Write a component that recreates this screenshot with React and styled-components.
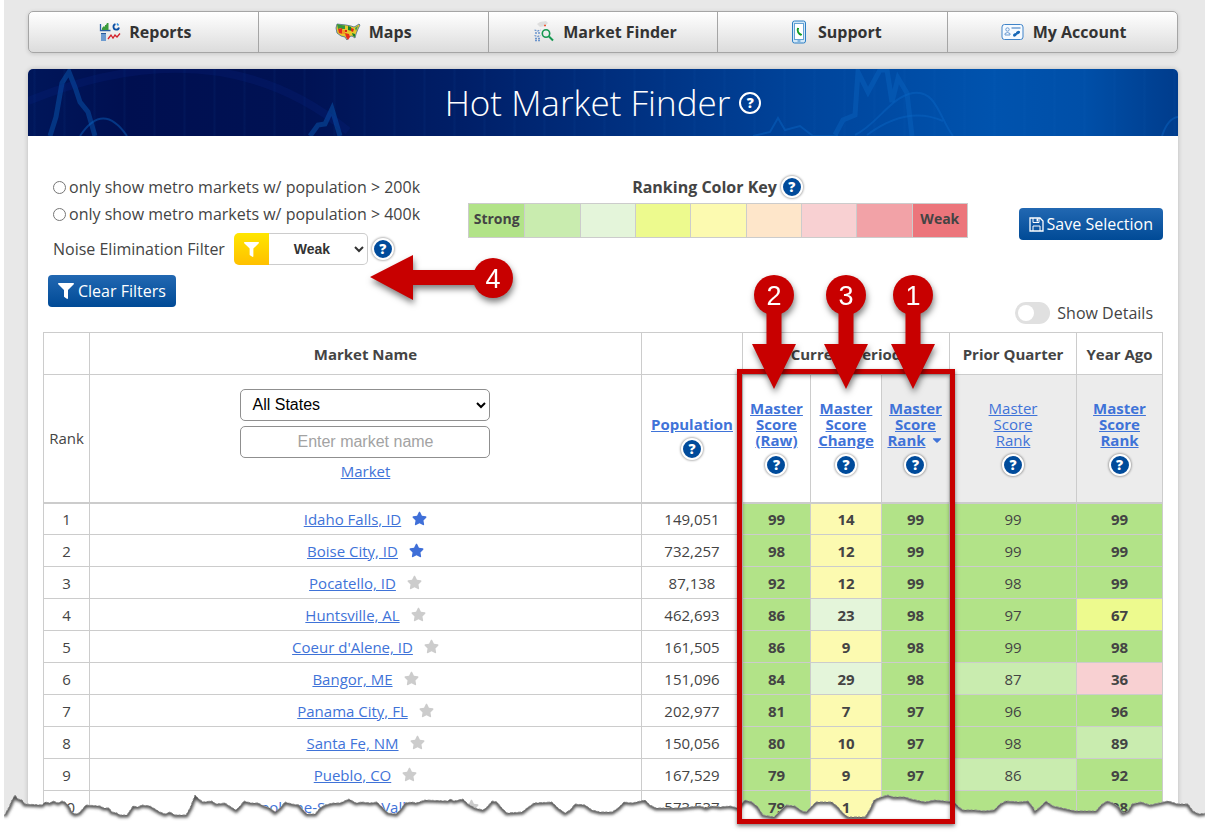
import React from "react";
import styled, { createGlobalStyle, css } from "styled-components";
import { FaCaretDown, FaFilter, FaStar } from "react-icons/fa";

const GlobalStyle = createGlobalStyle`
  *, *::before, *::after {
    box-sizing: border-box;
  }

  body {
    margin: 0;
    background: #fff;
    color: #444;
    font-family: "Open Sans", sans-serif;
    font-size: 16px;
  }
`;

const Page = styled.div`
  position: relative;
  overflow: hidden;
  min-height: 100vh;
  margin: 0 5px 0 4px;
  padding: 11px 27px 0 24px;
  background: #e8e8e8;
`;

const Nav = styled.nav`
  display: flex;
  height: 42px;
  overflow: hidden;
  border: 1px solid #a5a5a5;
  border-radius: 5px;
  background: linear-gradient(#fff, #dcdcdc);
  box-shadow: 0 1px 4px rgba(0, 0, 0, 0.15);
`;

const NavLink = styled.a`
  flex: 1;
  display: flex;
  align-items: center;
  justify-content: center;
  gap: 8px;
  color: #333;
  font-weight: 700;
  text-decoration: none;

  & + & {
    border-left: 1px solid #a5a5a5;
  }
`;

const Panel = styled.main`
  margin-top: 16px;
  padding-bottom: 11px;
  border-radius: 5px 5px 0 0;
  background: #fff;
  box-shadow: 0 0 5px rgba(0, 0, 0, 0.2);
`;

const Banner = styled.header`
  position: relative;
  display: flex;
  align-items: center;
  justify-content: center;
  gap: 9px;
  height: 67px;
  overflow: hidden;
  border-radius: 5px 5px 0 0;
  color: #fff;
  background:
    repeating-linear-gradient(
      90deg,
      transparent 0 5px,
      rgba(30, 110, 200, 0.06) 6px 7px,
      transparent 8px 30px
    ),
    linear-gradient(
      90deg,
      #00165a 0%,
      #000f50 9%,
      #001254 24%,
      #001f68 38%,
      #003080 52%,
      #00459c 68%,
      #0053ae 84%,
      #004fa8 92%,
      #003c8c 100%
    );
`;

const BannerLines = styled.svg`
  position: absolute;
  inset: 0;
  width: 100%;
  height: 100%;
  fill: none;
  stroke: #0a66c4;
`;

const Title = styled.h1`
  position: relative;
  margin: 0;
  font-size: 35px;
  font-weight: 300;
  line-height: 48px;
`;

const helpBase = css`
  display: inline-flex;
  align-items: center;
  justify-content: center;
  flex: none;
  padding: 0;
  color: #fff;
  font-family: "Open Sans", sans-serif;
  font-weight: 800;
`;

const TitleHelp = styled.button`
  ${helpBase}
  position: relative;
  width: 22px;
  height: 22px;
  border: 2px solid #fff;
  border-radius: 50%;
  background: none;
  font-size: 14px;
  line-height: 14px;
`;

const HelpButton = styled.button`
  ${helpBase}
  width: 22px;
  height: 22px;
  margin: 1px;
  border: 2px solid #fff;
  border-radius: 50%;
  background: #004b9b;
  box-shadow: 0 0 2px 1px rgba(0, 0, 0, 0.28);
  font-size: 14px;
  line-height: 14px;
`;

const Controls = styled.section`
  position: relative;
  display: grid;
  grid-template-columns: 425px minmax(0, 500px) 1fr;
  min-height: 196px;
  padding: 37px 15px 0;
`;

const Filters = styled.div`
  padding: 1px 0 0 5px;
`;

const RadioLabel = styled.label`
  display: flex;
  align-items: center;
  gap: 3px;
  padding-left: 5px;
  line-height: 27px;

  input {
    width: 13px;
    height: 13px;
    margin: 0;
  }
`;

const NoiseRow = styled.div`
  display: flex;
  align-items: center;
  gap: 3px;
  margin: 5px 0 10px;
  padding-left: 5px;

  label {
    margin-right: 6px;
  }
`;

const NoiseSelect = styled.div`
  display: flex;
  width: 134px;
  height: 32px;

  select {
    flex: 1;
    padding: 0;
    border: 1px solid #ccc;
    border-left: 0;
    border-radius: 0 5px 5px 0;
    background: #fff;
    color: #333;
    font: bold 14px "Liberation Sans", Arial, sans-serif;
    text-align: center;
    text-align-last: center;
  }
`;

const FilterBadge = styled.span`
  display: flex;
  align-items: center;
  justify-content: center;
  width: 35px;
  border-radius: 5px 0 0 5px;
  background: linear-gradient(#ffe600, #ffc000);
  color: #fff;
  font-size: 15px;
`;

const ActionButton = styled.button`
  display: inline-flex;
  align-items: center;
  gap: ${({ $gap }) => $gap || "4px"};
  height: 32px;
  padding: 0 10px;
  border: 0;
  border-radius: 4px;
  background: linear-gradient(#2268b2, #004a96);
  color: #fff;
  font: 16px "Open Sans", sans-serif;
  white-space: nowrap;
`;

const KeyTitle = styled.div`
  display: flex;
  align-items: center;
  justify-content: center;
  gap: 3px;
  height: 27px;
  font-weight: 700;
`;

const KeyScale = styled.div`
  display: grid;
  grid-template-columns: repeat(9, 1fr);
  height: 35px;
  margin-top: 3px;
  border: 1px solid #ccc;
`;

const KeyCell = styled.span`
  padding-top: 5px;
  background: ${({ $color }) => $color};
  font-size: 14px;
  font-weight: 700;
  line-height: 19px;
  text-align: center;

  & + & {
    border-left: 1px solid #ccc;
  }
`;

const SideActions = styled.div`
  display: flex;
  flex-direction: column;
  align-items: flex-end;
  justify-content: space-between;
  padding: 35px 0 8px;
`;

const SwitchLabel = styled.label`
  display: flex;
  align-items: center;
  gap: 7px;
  height: 22px;
  margin-right: 10px;
`;

const Switch = styled.input`
  appearance: none;
  display: flex;
  align-items: center;
  width: 35px;
  height: 22px;
  margin: 0;
  padding: 0 3px;
  border-radius: 11px;
  background: #e0e0e0;

  &::before {
    content: "";
    width: 16px;
    height: 16px;
    border-radius: 50%;
    background: #fff;
  }

  &:checked {
    justify-content: flex-end;
    background: #004b9b;
  }
`;

const TableWrap = styled.section`
  position: relative;
  margin: 0 15px;
`;

const Table = styled.table`
  width: 100%;
  table-layout: fixed;
  border-collapse: collapse;
  font-size: 15px;
  text-align: center;

  th,
  td {
    padding: 0;
    border: 1px solid #ccc;
  }
`;

const Col = styled.col`
  width: ${({ $width }) => $width};
`;

const GroupRow = styled.tr`
  height: 42px;
`;

const HeadRow = styled.tr`
  height: 128px;

  th {
    border-bottom-width: 2px;
  }
`;

const HeadCell = styled.th`
  background: ${({ $shaded }) => ($shaded ? "#ececec" : "#fff")};
  font-weight: ${({ $bold }) => ($bold ? 700 : 400)};
  line-height: 16px;

  ${HelpButton} {
    margin-top: 6px;
  }
`;

const Link = styled.a`
  color: #3f73d8;
  text-decoration: underline;
`;

const SortIcon = styled(FaCaretDown)`
  margin-left: 4px;
  color: #3f73d8;
  font-size: 14px;
  vertical-align: -1px;
`;

const MarketFilter = styled.div`
  display: flex;
  flex-direction: column;
  align-items: center;
  padding-bottom: 3px;
  line-height: 27px;
`;

const fieldStyle = css`
  width: 250px;
  height: 32px;
  border: 1px solid #8f8f8f;
  border-radius: 5px;
  background: #fff;
  color: #000;
  font: 16px "Liberation Sans", Arial, sans-serif;
`;

const StateSelect = styled.select`
  ${fieldStyle}
  margin-bottom: 5px;
  padding: 0 0 0 7px;
`;

const MarketInput = styled.input`
  ${fieldStyle}
  text-align: center;

  &::placeholder {
    color: #a3a3a3;
  }
`;

const Row = styled.tr`
  height: 32px;
`;

const Market = styled.div`
  display: flex;
  align-items: center;
  justify-content: center;
  gap: 11px;
  white-space: nowrap;
`;

const Star = styled(FaStar)`
  color: ${({ $starred }) => ($starred ? "#3f6fd8" : "#ccc")};
  font-size: 15px;
`;

const Score = styled.td`
  background: ${({ $color }) => $color};
  font-weight: ${({ $bold }) => ($bold ? 700 : 400)};
`;

const Highlight = styled.div`
  position: absolute;
  z-index: 2;
  top: 37px;
  right: 208px;
  width: 218px;
  height: 455px;
  border: 5px solid #c80000;
  box-shadow: 0 2px 4px rgba(0, 0, 0, 0.5), inset 0 2px 4px rgba(0, 0, 0, 0.4);
  pointer-events: none;
`;

const arrowStyle = css`
  position: absolute;
  z-index: 3;
  overflow: visible;
  fill: #c80000;
  filter: drop-shadow(1px 4px 3px rgba(0, 0, 0, 0.5));
  pointer-events: none;

  text {
    fill: #fff;
    font: 27px "Liberation Sans", Arial, sans-serif;
    text-anchor: middle;
  }
`;

const DownArrow = styled.svg`
  ${arrowStyle}
  top: -58px;
  right: ${({ $right }) => $right};
`;

const LeftArrow = styled.svg`
  ${arrowStyle}
  top: 119px;
  left: 342px;
`;

const TornEdge = styled.svg`
  position: absolute;
  z-index: 1;
  bottom: 0;
  left: -4px;
  width: calc(100% + 9px);
  height: 54px;
  pointer-events: none;
`;

const ReportsIcon = () => (
  <svg width="26" height="22" viewBox="0 0 26 22" fill="none" aria-hidden="true">
    <path d="M5.500 3v6.500h10" stroke="#2a62a8" strokeWidth="1.300" />
    <path d="M7 9V7l2-2 1 1V4h1l1-2h1.500v7z" fill="#3c9b3c" />
    <path d="M20.500 3.200a2.800 2.800 0 1 0 3.500 3.300" stroke="#0b4ea2" strokeWidth="1.800" />
    <path d="M22 2.500l1.500 2" stroke="#2d8fe0" strokeWidth="1.500" />
    <path d="M6 12h5v8H6z" fill="#6d9bd0" />
    <path d="M6 12.500h5" stroke="#285a9c" />
    <path d="M13 18l3-4 2 3 2-3 2 2 3-3.500" stroke="#d3202a" strokeWidth="1.300" />
  </svg>
);

const MapsIcon = () => (
  <svg width="26" height="20" viewBox="0 0 26 20" aria-hidden="true">
    <path
      d="M2 2l9 1 5 1 3 1 2-1 3-2 1 1-2 4-2 5-1 4-3-2-4 1-1 3-2-3-4-1-4-3-1-5z"
      fill="#e8c92c"
      stroke="#426b94"
      strokeWidth=".8"
    />
    <path d="M2 2l4 1v3l-3 1z" fill="#34963c" />
    <path d="M6 3l4 .5V7H6z" fill="#34963c" />
    <path d="M3 7l4-1 1 6-4-1zM10 11l4 1 1 3-2 3-2-3z" fill="#e72c1e" />
    <path d="M13 4l3 1 1 4-4-1zM17 11l3 1v3l-2-1z" fill="#14822e" />
    <path d="M7 8h3v4H7z" fill="#f09b21" />
    <path d="M16 6l3 1-1 3-2-1zM10 8h2v2h-2z" fill="#d82818" />
    <path d="M20 6l3-2-2 5z" fill="#2f9d53" />
  </svg>
);

const FinderIcon = () => (
  <svg width="26" height="24" viewBox="0 0 26 24" fill="none" aria-hidden="true">
    <path d="M8 4l3-2 6-1 2 2-3 3-5 1z" fill="#dedede" />
    <path d="M15 5.500h2" stroke="#ef5834" strokeWidth="1.500" />
    <path
      d="M5.500 10l3 1 3-1M6 13h5M5.500 15.500l3 1 3-1M6 18.500h6M6 20.500h5"
      stroke="#6b94cc"
      strokeWidth="1.300"
      strokeDasharray="2 1"
    />
    <circle cx="17" cy="13.500" r="3.700" stroke="#159850" strokeWidth="1.600" />
    <path d="M20 16.500l4 4" stroke="#159850" strokeWidth="2" />
  </svg>
);

const SupportIcon = () => (
  <svg width="26" height="24" viewBox="0 0 26 24" fill="none" aria-hidden="true">
    <rect x="8.500" y="1" width="13" height="22" rx="2" fill="#d4e8f7" stroke="#2c7fc4" />
    <rect x="10.500" y="3.500" width="9" height="16" fill="#fff" stroke="#64a2d4" />
    <path d="M13.500 21h3" stroke="#2c7fc4" />
    <path d="M14 8c-1 3 .5 6 3.500 7" stroke="#159b27" strokeWidth="2" />
    <path d="M13 8.500h2M16 14.500h2" stroke="#159b27" />
  </svg>
);

const AccountIcon = () => (
  <svg width="26" height="20" viewBox="0 0 26 20" fill="none" aria-hidden="true">
    <rect x="3" y="2.500" width="21" height="15" rx="2.500" fill="#f5faff" stroke="#3f83c8" />
    <circle cx="8.500" cy="7.500" r="1.700" stroke="#6b9bd1" />
    <path d="M6 13v-1.500q2.500-2 5 0V13z" stroke="#6b9bd1" />
    <path d="M12.500 6h9" stroke="#91b5dd" strokeWidth="2" />
    <ellipse cx="16" cy="12.800" rx="2.200" ry="1.500" transform="rotate(-35 16 12.800)" fill="#1567b7" />
    <ellipse cx="19" cy="10.600" rx="2.200" ry="1.500" transform="rotate(-35 19 10.600)" fill="#1567b7" />
  </svg>
);

const SaveIcon = () => (
  <svg width="15" height="15" viewBox="0 0 15 15" fill="none" stroke="#fff" aria-hidden="true">
    <path d="M1 1h10l3 3v10H1z" strokeWidth="1.300" />
    <path d="M4 14V9h7v5M4 1v4.500h6V1" />
    <path d="M8.300 1.500v3" strokeWidth="1.500" />
  </svg>
);

const navItems = [
  { label: "Reports", Icon: ReportsIcon },
  { label: "Maps", Icon: MapsIcon },
  { label: "Market Finder", Icon: FinderIcon },
  { label: "Support", Icon: SupportIcon },
  { label: "My Account", Icon: AccountIcon }
];

const scale = [
  "#b2e388",
  "#c9ecaf",
  "#e4f5da",
  "#edfa8e",
  "#fcfab0",
  "#fee6ca",
  "#f8d0d2",
  "#f2a2a7",
  "#ec757b"
];

const keyLabels = { 0: "Strong", 8: "Weak" };

const columnWidths = ["46px", "auto", "101px", "68px", "71px", "68px", "127px", "86px"];

// scores: [value, index in the color scale]
const markets = [
  { name: "Idaho Falls, ID", starred: true, population: "149,051", scores: [[99, 0], [14, 4], [99, 0], [99, 0], [99, 0]] },
  { name: "Boise City, ID", starred: true, population: "732,257", scores: [[98, 0], [12, 4], [99, 0], [99, 0], [99, 0]] },
  { name: "Pocatello, ID", population: "87,138", scores: [[92, 0], [12, 4], [99, 0], [98, 0], [99, 0]] },
  { name: "Huntsville, AL", population: "462,693", scores: [[86, 0], [23, 2], [98, 0], [97, 0], [67, 3]] },
  { name: "Coeur d'Alene, ID", population: "161,505", scores: [[86, 0], [9, 4], [98, 0], [99, 0], [98, 0]] },
  { name: "Bangor, ME", population: "151,096", scores: [[84, 0], [29, 2], [98, 0], [87, 1], [36, 6]] },
  { name: "Panama City, FL", population: "202,977", scores: [[81, 0], [7, 4], [97, 0], [96, 0], [96, 0]] },
  { name: "Santa Fe, NM", population: "150,056", scores: [[80, 0], [10, 4], [97, 0], [98, 0], [89, 1]] },
  { name: "Pueblo, CO", population: "167,529", scores: [[79, 0], [9, 4], [97, 0], [86, 1], [92, 0]] },
  { name: "Spokane-Spokane Valley, WA", population: "573,537", scores: [[79, 0], [1, 4], [97, 0], [97, 0], [98, 0]] }
];

const scoreHeads = [
  { id: "raw", lines: ["Master", "Score", "(Raw)"], bold: true },
  { id: "change", lines: ["Master", "Score", "Change"], bold: true },
  { id: "rank", lines: ["Master", "Score", "Rank"], bold: true, shaded: true, sorted: true },
  { id: "prior", lines: ["Master", "Score", "Rank"], shaded: true },
  { id: "year", lines: ["Master", "Score", "Rank"], bold: true, shaded: true }
];

const tear =
  "M4 816L9 807L12 800L15 795L18 799L22 800L25 804L42 805L45 802L50 803L53 801L58 803L62 801L65 802L69 806L72 812L75 814L79 813L86 805L100 806L104 808L109 808L112 812L117 813L120 815L127 815L133 806L138 807L142 805L150 806L155 809L160 812L165 814L170 812L175 815L186 815L190 808L195 795L199 799L203 802L212 801L216 804L225 803L231 807L236 810L240 806L244 801L251 803L258 803L264 806L270 808L275 812L280 808L285 802L292 804L299 805L303 810L307 814L315 814L320 808L325 805L333 803L340 803L349 799L356 803L362 802L370 803L377 802L382 807L388 813L396 814L401 809L405 803L412 802L416 803L425 800L448 801L450 799L454 801L463 799L468 804L475 808L483 810L487 807L492 801L497 802L501 807L507 813L522 812L527 808L534 803L552 802L558 808L565 813L570 810L575 804L585 805L592 810L600 812L612 812L618 808L624 802L632 803L645 800L650 805L656 808L680 808L700 806L706 808L712 806L720 807L730 806L738 808L745 800L752 802L758 807L763 815L774 817L780 811L786 805L795 806L802 811L806 812L812 806L816 802L832 802L838 807L843 813L848 817L865 817L870 809L874 800L881 797L888 795L893 797L905 797L911 799L925 802L935 800L954 802L959 807L963 810L975 810L984 811L994 810L1000 804L1006 801L1020 802L1028 801L1033 807L1035 811L1040 807L1046 801L1053 806L1062 808L1075 811L1096 811L1101 805L1107 801L1113 803L1119 807L1123 813L1128 811L1132 804L1141 802L1150 805L1168 801L1178 804L1188 804L1193 811L1199 814L1206 813";

const Help = ({ topic }) => <HelpButton aria-label={`Help: ${topic}`}>?</HelpButton>;

const StepDown = ({ step, right }) => (
  <DownArrow $right={right} width="46" height="116" viewBox="0 0 46 116">
    <path d="M15.500 30h15v40H45L23 115 1 70h14.500z" />
    <circle cx="23" cy="21" r="20" />
    <text x="23" y="31">{step}</text>
  </DownArrow>
);

const StepLeft = ({ step }) => (
  <LeftArrow width="146" height="46" viewBox="0 0 146 46">
    <path d="M0 22L43 0v15h75v15H43v15z" />
    <circle cx="123" cy="23" r="20" />
    <text x="123" y="33">{step}</text>
  </LeftArrow>
);

const App = () => {
  return (
    <>
      <GlobalStyle />
      <Page>
        <Nav>
          {navItems.map(({ label, Icon }) => (
            <NavLink key={label} href="#">
              <Icon />
              {label}
            </NavLink>
          ))}
        </Nav>

        <Panel>
          <Banner>
            <BannerLines viewBox="0 0 1150 67" preserveAspectRatio="none" aria-hidden="true">
              <g strokeWidth="5" opacity=".4">
                <path d="M22 67L28 48 34 14 41 3 47 18 52 33 60 43 67 67" />
                <path d="M282 67l8-11 7-1 7-15 8 27" />
                <path d="M807 66l8-15 12-5 3-43 10 20 12-22h7l5 32 6-24 9 15 5 43" />
              </g>
              <g strokeWidth="2" opacity=".45">
                <path d="M52 67Q75 32 99 67" />
                <path d="M725 67l17-4 8-14 7 12 15-4 13 10h25" />
                <path d="M827 66C850 55 862 28 885 24S912 50 925 67M839 66q40-30 76-14" />
                <path d="M1134 67q6-18 16-19" />
              </g>
              <path d="M0 32Q190-45 320 62" stroke="#0b2fa0" strokeWidth="8" opacity=".15" />
            </BannerLines>
            <Title>Hot Market Finder</Title>
            <TitleHelp aria-label="Help: Hot Market Finder">?</TitleHelp>
          </Banner>

          <Controls>
            <Filters>
              <RadioLabel>
                <input type="radio" name="population" value="200" />
                only show metro markets w/ population &gt; 200k
              </RadioLabel>
              <RadioLabel>
                <input type="radio" name="population" value="400" />
                only show metro markets w/ population &gt; 400k
              </RadioLabel>
              <NoiseRow>
                <label htmlFor="noise">Noise Elimination Filter</label>
                <NoiseSelect>
                  <FilterBadge>
                    <FaFilter />
                  </FilterBadge>
                  <select id="noise" defaultValue="Weak">
                    <option>Weak</option>
                  </select>
                </NoiseSelect>
                <Help topic="Noise Elimination Filter" />
              </NoiseRow>
              <ActionButton>
                <FaFilter />
                Clear Filters
              </ActionButton>
            </Filters>

            <div>
              <KeyTitle>
                Ranking Color Key
                <Help topic="Ranking Color Key" />
              </KeyTitle>
              <KeyScale>
                {scale.map((color, i) => (
                  <KeyCell key={color} $color={color}>
                    {keyLabels[i]}
                  </KeyCell>
                ))}
              </KeyScale>
            </div>

            <SideActions>
              <ActionButton $gap="3px">
                <SaveIcon />
                Save Selection
              </ActionButton>
              <SwitchLabel>
                <Switch type="checkbox" role="switch" />
                Show Details
              </SwitchLabel>
            </SideActions>
            <StepLeft step="4" />
          </Controls>

          <TableWrap>
            <Table>
              <colgroup>
                {columnWidths.map((width, i) => (
                  <Col key={i} $width={width} />
                ))}
              </colgroup>
              <thead>
                <GroupRow>
                  <th />
                  <th>Market Name</th>
                  <th />
                  <th colSpan={3}>Current Period</th>
                  <th>Prior Quarter</th>
                  <th>Year Ago</th>
                </GroupRow>
                <HeadRow>
                  <HeadCell>Rank</HeadCell>
                  <HeadCell>
                    <MarketFilter>
                      <StateSelect aria-label="State">
                        <option>All States</option>
                      </StateSelect>
                      <MarketInput aria-label="Market name" placeholder="Enter market name" />
                      <Link href="#">Market</Link>
                    </MarketFilter>
                  </HeadCell>
                  <HeadCell $bold>
                    <Link href="#">Population</Link>
                    <br />
                    <Help topic="Population" />
                  </HeadCell>
                  {scoreHeads.map(({ id, lines, bold, shaded, sorted }) => (
                    <HeadCell key={id} $bold={bold} $shaded={shaded}>
                      <Link href="#">
                        {lines[0]}
                        <br />
                        {lines[1]}
                        <br />
                        {lines[2]}
                      </Link>
                      {sorted && <SortIcon />}
                      <br />
                      <Help topic={lines.join(" ")} />
                    </HeadCell>
                  ))}
                </HeadRow>
              </thead>
              <tbody>
                {markets.map(({ name, starred, population, scores }, i) => (
                  <Row key={name}>
                    <td>{i + 1}</td>
                    <td>
                      <Market>
                        <Link href="#">{name}</Link>
                        <Star $starred={starred} />
                      </Market>
                    </td>
                    <td>{population}</td>
                    {scores.map(([value, step], j) => (
                      <Score key={j} $color={scale[step]} $bold={j !== 3}>
                        {value}
                      </Score>
                    ))}
                  </Row>
                ))}
              </tbody>
            </Table>
            <Highlight />
            <StepDown step="2" right="366px" />
            <StepDown step="3" right="294px" />
            <StepDown step="1" right="227px" />
          </TableWrap>
        </Panel>

        <TornEdge viewBox="0 780 1210 54" preserveAspectRatio="none" aria-hidden="true">
          <defs>
            <clipPath id="below-tear">
              <path d={`${tear}L1210 834L0 834L0 816Z`} />
            </clipPath>
            <filter id="tear-blur" x="-5%" y="-50%" width="110%" height="200%">
              <feGaussianBlur stdDeviation="1.500" />
            </filter>
          </defs>
          <path d={`${tear}L1210 834L0 834L0 816Z`} fill="#fff" />
          <g clipPath="url(#below-tear)" fill="none">
            <path d={tear} stroke="#555" strokeWidth="5" filter="url(#tear-blur)" />
          </g>
          <path d={tear} fill="none" stroke="#888" strokeWidth="1" strokeDasharray="2 2 3 1" />
        </TornEdge>
      </Page>
    </>
  );
};

export default App;
